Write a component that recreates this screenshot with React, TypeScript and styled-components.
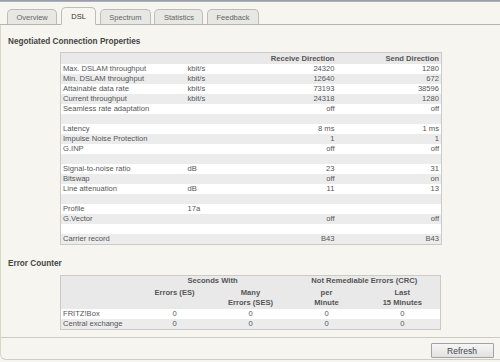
import React from "react";
import styled, { createGlobalStyle } from "styled-components";

const Global = createGlobalStyle`
  html, body { margin: 0; padding: 0; background: #f6f5f0; overflow: hidden; }
  body { font-family: "Liberation Sans", Arial, sans-serif; color: #555; }
`;

const Page = styled.div`
  width: 500px;
  height: 362px;
  display: flex;
  flex-direction: column;
  background: #f6f5f0;
`;

const TopStrip = styled.div`
  height: 2px;
  background: linear-gradient(#8f959b, #b7bbbf);
`;

const TabBar = styled.div`
  display: flex;
  align-items: flex-end;
  gap: 3.5px;
  padding: 5px 0 0 7px;
  height: 17px;
  border-bottom: 1px solid #b4b4b0;
`;

const Tab = styled.div<{ $active?: boolean }>`
  box-sizing: border-box;
  height: ${(p) => (p.$active ? "18px" : "15px")};
  margin-bottom: ${(p) => (p.$active ? "-1px" : "0")};
  padding: 0 ${(p) => (p.$active ? "9.5px" : "8.5px")};
  display: flex;
  align-items: center;
  justify-content: center;
  font-family: "Liberation Sans", Arial, sans-serif;
  font-size: 7.5px;
  color: ${(p) => (p.$active ? "#333" : "#666")};
  background: ${(p) => (p.$active ? "#f6f5f0" : "#e7e7e4")};
  border: 1px solid #bdbdb8;
  border-bottom: ${(p) => (p.$active ? "1px solid #f6f5f0" : "none")};
  border-radius: 5px 5px 0 0;
  padding-top: ${(p) => (p.$active ? "0" : "1px")};
`;

const Panel = styled.div`
  flex: 1;
  display: flex;
  flex-direction: column;
  border-left: 1px solid #d9d8c4;
  border-bottom: 1px solid #cfcfc6;
  border-bottom-left-radius: 6px;
  margin-bottom: 2px;
`;

const Content = styled.div`
  padding: 11.5px 0 6.5px 7px;
  display: flex;
  flex-direction: column;
`;

const Heading = styled.div<{ $top?: number }>`
  font-size: 8.2px;
  line-height: 10px;
  font-weight: bold;
  color: #444;
  margin-top: ${(p) => p.$top ?? 0}px;
`;

const Table = styled.table`
  margin: 5.8px 0 0 52px;
  width: 381px;
  border-collapse: collapse;
  border: 1px solid #cacaca;
  font-family: "Liberation Sans", Arial, sans-serif;
  font-size: 7.6px;
  color: #555;
  table-layout: fixed;
`;

const Row = styled.tr<{ $alt?: boolean }>`
  background: ${(p) => (p.$alt ? "#ececec" : "#ffffff")};
`;

const HeadRow = styled.tr`
  background: #e9e9e9;
`;

const Cell = styled.td<{ $align?: "left" | "right" | "center" }>`
  height: 10px;
  line-height: 10px;
  padding: 0 2px;
  color: #555;
  text-align: ${(p) => p.$align ?? "left"};
  white-space: nowrap;
  overflow: hidden;
`;

const HeadCell = styled.th<{ $align?: "left" | "right" | "center"; $h?: number }>`
  height: ${(p) => p.$h ?? 11}px;
  line-height: 9.4px;
  padding: 0 2px;
  font-weight: bold;
  text-align: ${(p) => p.$align ?? "left"};
  vertical-align: ${(p) => (p.$h && p.$h > 15 ? "top" : "middle")};
  padding-top: ${(p) => (p.$h && p.$h > 15 ? "1.5px" : "0")};
  color: #555;
`;

const Footer = styled.div`
  display: flex;
  justify-content: flex-end;
  border-top: 1px solid #cbcbc6;
  padding: 5.5px 6.5px 0 0;
  flex: 1;
`;

const Button = styled.button`
  width: 63px;
  height: 15px;
  padding: 0;
  font-family: "Liberation Sans", Arial, sans-serif;
  font-size: 8.5px;
  color: #444;
  background: linear-gradient(#f6f6f6, #e2e2e2);
  border: 1px solid #a3a3a3;
  border-radius: 1px;
`;

type R = [string, string, string, string] | null;

const rows: R[] = [
  ["Max. DSLAM throughput", "kbit/s", "24320", "1280"],
  ["Min. DSLAM throughput", "kbit/s", "12640", "672"],
  ["Attainable data rate", "kbit/s", "73193", "38596"],
  ["Current throughput", "kbit/s", "24318", "1280"],
  ["Seamless rate adaptation", "", "off", "off"],
  null,
  ["Latency", "", "8 ms", "1 ms"],
  ["Impulse Noise Protection", "", "1", "1"],
  ["G.INP", "", "off", "off"],
  null,
  ["Signal-to-noise ratio", "dB", "23", "31"],
  ["Bitswap", "", "off", "on"],
  ["Line attenuation", "dB", "11", "13"],
  null,
  ["Profile", "17a", "", ""],
  ["G.Vector", "", "off", "off"],
  null,
  ["Carrier record", "", "B43", "B43"],
];

const tabs = ["Overview", "DSL", "Spectrum", "Statistics", "Feedback"];

export default function App() {
  return (
    <Page>
      <Global />
      <TopStrip />
      <TabBar>
        {tabs.map((t) => (
          <Tab key={t} $active={t === "DSL"}>
            {t}
          </Tab>
        ))}
      </TabBar>
      <Panel>
        <Content>
          <Heading>Negotiated Connection Properties</Heading>
          <Table>
            <colgroup>
              <col style={{ width: 125 }} />
              <col style={{ width: 60 }} />
              <col style={{ width: 91 }} />
              <col style={{ width: 105 }} />
            </colgroup>
            <thead>
              <HeadRow>
                <HeadCell />
                <HeadCell />
                <HeadCell $align="right">Receive Direction</HeadCell>
                <HeadCell $align="right">Send Direction</HeadCell>
              </HeadRow>
            </thead>
            <tbody>
              {rows.map((r, i) => (
                <Row key={i} $alt={i % 2 === 1}>
                  <Cell>{r ? r[0] : ""}</Cell>
                  <Cell>{r ? r[1] : ""}</Cell>
                  <Cell $align="right">{r ? r[2] : ""}</Cell>
                  <Cell $align="right">{r ? r[3] : ""}</Cell>
                </Row>
              ))}
            </tbody>
          </Table>

          <Heading $top={13.5}>Error Counter</Heading>
          <Table>
            <colgroup>
              <col style={{ width: "20%" }} />
              <col style={{ width: "20%" }} />
              <col style={{ width: "20%" }} />
              <col style={{ width: "20%" }} />
              <col style={{ width: "20%" }} />
            </colgroup>
            <thead>
              <HeadRow>
                <HeadCell $h={11} />
                <HeadCell $h={11} colSpan={2} $align="center">
                  Seconds With
                </HeadCell>
                <HeadCell $h={11} colSpan={2} $align="center">
                  Not Remediable Errors (CRC)
                </HeadCell>
              </HeadRow>
              <HeadRow>
                <HeadCell $h={21} />
                <HeadCell $h={21} $align="center">
                  Errors (ES)
                </HeadCell>
                <HeadCell $h={21} $align="center">
                  Many
                  <br />
                  Errors (SES)
                </HeadCell>
                <HeadCell $h={21} $align="center">
                  per
                  <br />
                  Minute
                </HeadCell>
                <HeadCell $h={21} $align="center">
                  Last
                  <br />
                  15 Minutes
                </HeadCell>
              </HeadRow>
            </thead>
            <tbody>
              {["FRITZ!Box", "Central exchange"].map((l, i) => (
                <Row key={l} $alt={i === 1}>
                  <Cell>{l}</Cell>
                  <Cell $align="center">0</Cell>
                  <Cell $align="center">0</Cell>
                  <Cell $align="center">0</Cell>
                  <Cell $align="center">0</Cell>
                </Row>
              ))}
            </tbody>
          </Table>
        </Content>
        <Footer>
          <Button>Refresh</Button>
        </Footer>
      </Panel>
    </Page>
  );
}
